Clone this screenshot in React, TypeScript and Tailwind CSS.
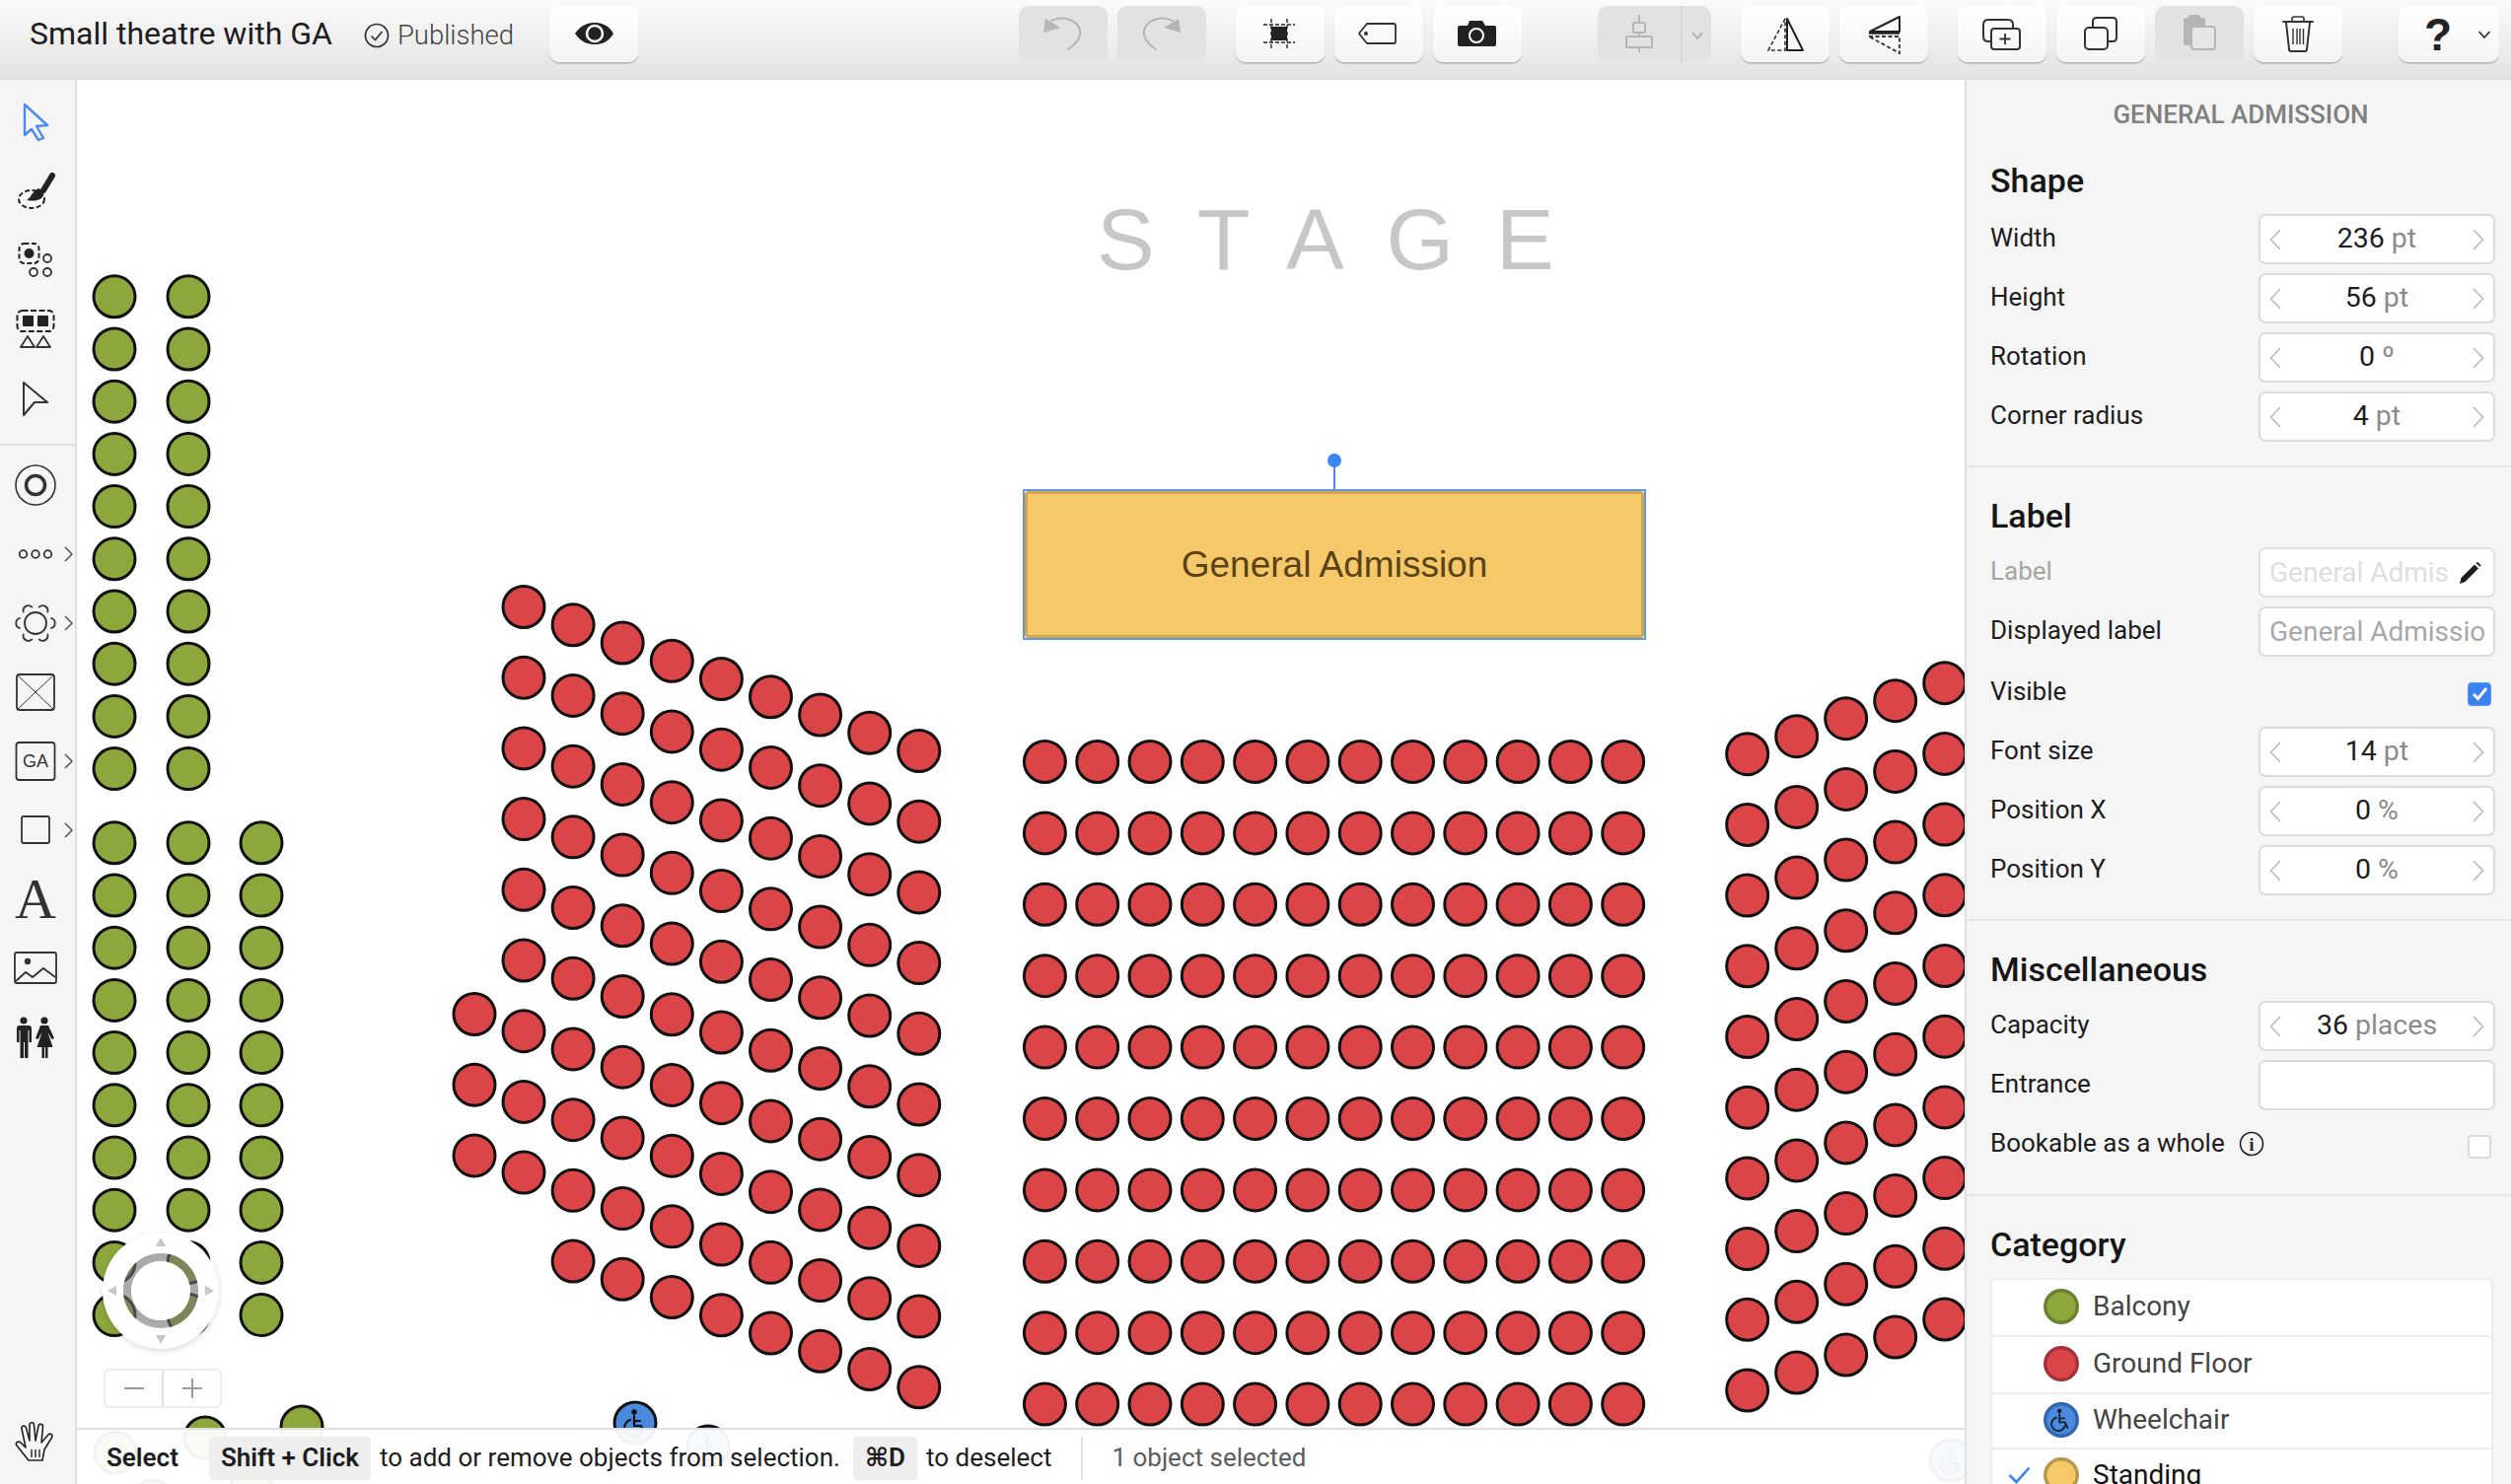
import type { ReactNode } from "react";

type Seat = { x: number; y: number };

// offset of the canvas inside the page, seat coordinates are page coordinates
const OFFSET_X = 78;
const OFFSET_Y = 81;

const greenSeats: Seat[] = [];
for (const x of [116, 191]) {
  for (let i = 0; i < 10; i++) greenSeats.push({ x, y: 300.8 + i * 53.2 });
}
for (const x of [116, 191, 265]) {
  for (let i = 0; i < 10; i++) greenSeats.push({ x, y: 854.8 + i * 53.2 });
}
greenSeats.push({ x: 117, y: 1473 }, { x: 208, y: 1458 }, { x: 306, y: 1447 }, { x: 155, y: 1522 }, { x: 255, y: 1510 });

const redSeats: Seat[] = [];
// left wedge
for (let c = 0; c < 9; c++) {
  const rows = c === 0 ? 9 : 10;
  for (let r = 0; r < rows; r++) {
    redSeats.push({ x: 531 + c * 50.1, y: 615.5 + c * 18.25 + r * 71.7 });
  }
}
for (let r = 0; r < 3; r++) redSeats.push({ x: 481, y: 1028.5 + r * 71.7 });
// centre block
for (let c = 0; c < 12; c++) {
  for (let r = 0; r < 10; r++) {
    redSeats.push({ x: 1059.4 + c * 53.3, y: 772.5 + r * 72.4 });
  }
}
// right wedge
for (let c = 0; c < 5; c++) {
  for (let r = 0; r < 10; r++) {
    redSeats.push({ x: 1771.7 + c * 50, y: 764.7 - c * 18 + r * 71.7 });
  }
}

function WheelchairGlyph({ color, stroke }: { color: string; stroke: number }) {
  return (
    <g fill="none" stroke={color} strokeWidth={stroke} strokeLinecap="round" strokeLinejoin="round">
      <circle cx="-1" cy="-11" r="1.6" fill={color} />
      <path d="M-1 -7 V3 H6 L9 10" />
      <path d="M-1 -2 H5" />
      <path d="M-5 -3 A8.5 8.5 0 1 0 6 7" />
    </g>
  );
}

function Btn({ children, off, width = "w-[90px]", className = "" }: { children: ReactNode; off?: boolean; width?: string; className?: string }) {
  return (
    <div
      className={`${width} h-[57px] shrink-0 rounded-[10px] ${
        off
          ? "bg-[#e2e2e2]"
          : "bg-gradient-to-b from-white to-[#f4f4f4] shadow-[0_2px_1px_rgba(0,0,0,0.18)]"
      } ${className}`}
    >
      {children}
    </div>
  );
}

function BtnIcon({ w = 90, children }: { w?: number; children: ReactNode }) {
  return (
    <svg width={w} height={57} viewBox={`0 0 ${w} 57`} fill="none" className="block">
      {children}
    </svg>
  );
}

function Header() {
  return (
    <div className="h-[81px] shrink-0 flex items-start pt-[6px] border-b-2 border-[#dcdcdc] bg-gradient-to-b from-[#fbfbfb] to-[#e3e3e3]">
      <div className="w-[557px] shrink-0 h-[57px] pl-[30px] flex items-center pb-[1px]">
        <span className="text-[32px] text-[#1d1d1d]">Small theatre with GA</span>
        <svg width="26" height="26" viewBox="0 0 26 26" fill="none" stroke="#333" strokeWidth="1.7" className="ml-[32px] mt-[3px]">
          <circle cx="13" cy="13" r="11.5" />
          <path d="M7.5 13.5 L11.5 17.5 L18.5 9" />
        </svg>
        <span className="ml-[8px] mt-[3px] text-[27.5px] font-light text-[#444]">Published</span>
      </div>

      <Btn>
        <BtnIcon>
          <path d="M26 28 C32 19 40 17 46 17 C52 17 60 19 65 28 C60 37 52 39 46 39 C40 39 32 37 26 28Z" fill="#222" />
          <circle cx="46" cy="28" r="8" fill="#222" stroke="#fff" strokeWidth="2.5" />
        </BtnIcon>
      </Btn>

      <Btn off className="ml-[386px]">
        <BtnIcon>
          <path d="M50 44 C59 38 63 32 62 25 C60 15 46 9 33 15" stroke="#b5b5b5" strokeWidth="2" strokeLinecap="round" />
          <path d="M27 13 L25 27 L42 22Z" fill="#b5b5b5" />
        </BtnIcon>
      </Btn>
      <Btn off className="ml-[10px]">
        <BtnIcon>
          <path d="M39 44 C30 38 26 32 27 25 C29 15 43 9 56 15" stroke="#b5b5b5" strokeWidth="2" strokeLinecap="round" />
          <path d="M62 13 L64 27 L47 22Z" fill="#b5b5b5" />
        </BtnIcon>
      </Btn>

      <Btn className="ml-[30px]">
        <BtnIcon>
          <rect x="36" y="21" width="16" height="14" fill="#222" />
          <path d="M28 19 H60 M28 37 H60" stroke="#222" strokeWidth="1.6" strokeDasharray="4 2" />
          <path d="M36 13 V43 M52 13 V43" stroke="#222" strokeWidth="1.4" strokeDasharray="4 2.5" />
        </BtnIcon>
      </Btn>
      <Btn className="ml-[10px]">
        <BtnIcon>
          <path d="M60 18 H33 L25 28 L33 38 H60 Q62 38 62 36 V20 Q62 18 60 18Z" stroke="#333" strokeWidth="1.8" strokeLinejoin="round" />
          <circle cx="32" cy="28" r="2" fill="#333" />
        </BtnIcon>
      </Btn>
      <Btn className="ml-[10px]">
        <BtnIcon>
          <path d="M27 20 H35 L37 15 H50 L53 20 H62 Q64 20 64 22 V39 Q64 41 62 41 H27 Q25 41 25 39 V22 Q25 20 27 20Z" fill="#222" />
          <circle cx="44" cy="30" r="7" stroke="#fff" strokeWidth="2" />
        </BtnIcon>
      </Btn>

      <Btn off width="w-[115px]" className="ml-[77px] relative">
        <BtnIcon w={115}>
          <path d="M42 9 V47" stroke="#b5b5b5" strokeWidth="2" />
          <rect x="36" y="17" width="12" height="10" rx="1.5" fill="#e2e2e2" stroke="#b5b5b5" strokeWidth="2" />
          <rect x="29" y="31" width="26" height="11" rx="1.5" fill="#e2e2e2" stroke="#b5b5b5" strokeWidth="2" />
          <path d="M85 0 V57" stroke="#d2d2d2" strokeWidth="1.5" />
          <path d="M96 27 L101 33 L106 27" stroke="#aaa" strokeWidth="1.6" />
        </BtnIcon>
      </Btn>

      <Btn className="ml-[30px]">
        <BtnIcon>
          <path d="M45 13 L28 45 H45Z" stroke="#333" strokeWidth="1.6" strokeDasharray="4 2.5" />
          <path d="M47 13 L63 45 H47Z" stroke="#222" strokeWidth="2" strokeLinejoin="round" />
        </BtnIcon>
      </Btn>
      <Btn className="ml-[10px]">
        <BtnIcon>
          <path d="M61 11 V26 H31Z" stroke="#222" strokeWidth="2" strokeLinejoin="round" />
          <path d="M30 27.5 H61" stroke="#222" strokeWidth="2.5" />
          <path d="M30 31 H61 V48 Z" stroke="#333" strokeWidth="1.8" strokeDasharray="4 2.5" />
        </BtnIcon>
      </Btn>

      <Btn className="ml-[30px]">
        <BtnIcon>
          <path d="M33 36 H31 Q26 36 26 31 V19 Q26 14 31 14 H51 Q56 14 56 19 V22" stroke="#333" strokeWidth="2" />
          <rect x="34" y="23" width="29" height="21" rx="3" stroke="#333" strokeWidth="2" />
          <path d="M48 28 V39 M42.5 33.5 H53.5" stroke="#333" strokeWidth="1.8" />
        </BtnIcon>
      </Btn>
      <Btn className="ml-[10px]">
        <BtnIcon>
          <path d="M37 22 V16 Q37 12 41 12 H57 Q61 12 61 16 V32 Q61 36 57 36 H52" stroke="#333" strokeWidth="2" />
          <rect x="29" y="22" width="23" height="22" rx="4" stroke="#333" strokeWidth="2" />
        </BtnIcon>
      </Btn>
      <Btn off className="ml-[10px]">
        <BtnIcon>
          <rect x="29" y="12" width="22" height="28" rx="3" fill="#b5b5b5" />
          <rect x="34" y="9" width="12" height="5" rx="2" fill="#b5b5b5" />
          <rect x="37" y="21" width="24" height="23" rx="3" fill="#e6e6e6" stroke="#b5b5b5" strokeWidth="2" />
        </BtnIcon>
      </Btn>
      <Btn className="ml-[10px]">
        <BtnIcon>
          <path d="M30 16 H60" stroke="#333" strokeWidth="2" strokeLinecap="round" />
          <path d="M39 15 V13 Q39 11 41 11 H49 Q51 11 51 13 V15" stroke="#333" strokeWidth="1.6" />
          <path d="M33 17 L36 44 Q36 46 38 46 H52 Q54 46 54 44 L57 17" stroke="#333" strokeWidth="2" />
          <path d="M40 23 V39 M44 23 V39 M47 23 V39 M50.5 23 V39" stroke="#333" strokeWidth="1.4" />
        </BtnIcon>
      </Btn>

      <Btn width="w-[102px]" className="ml-[57px] relative flex items-center">
        <span className="w-[80px] text-center text-[46px] font-bold leading-none text-[#222] [font-family:'Liberation_Sans',sans-serif]">?</span>
        <svg width="14" height="10" viewBox="0 0 14 10" fill="none" stroke="#333" strokeWidth="1.8">
          <path d="M1.5 2 L7 8 L12.5 2" />
        </svg>
      </Btn>
    </div>
  );
}

function ToolIcon({ children, arrow }: { children: ReactNode; arrow?: boolean }) {
  return (
    <svg width="76" height="70" viewBox="0 0 76 70" fill="none" className="block shrink-0">
      {children}
      {arrow && <path d="M66 28 L73 35 L66 42" stroke="#555" strokeWidth="1.5" />}
    </svg>
  );
}

function Sidebar() {
  return (
    <div className="w-[78px] shrink-0 flex flex-col bg-[#f5f5f5] border-r-2 border-[#dedede] pt-[7px] relative">
      <ToolIcon>
        <path d="M25 18 L48 39 L37 40 L44 52 L39 54 L32 43 L25 49Z" stroke="#4a8af0" strokeWidth="2.4" strokeLinejoin="round" />
      </ToolIcon>
      <ToolIcon>
        <ellipse cx="32" cy="44" rx="13" ry="9" stroke="#222" strokeWidth="2" strokeDasharray="5 2.5" />
        <path d="M53 20 L44 35" stroke="#222" strokeWidth="6" strokeLinecap="round" />
        <path d="M39 33 C44 35 46 40 42 43 C38 46 32 46 27 45 C31 43 32 37 39 33Z" fill="#222" />
      </ToolIcon>
      <ToolIcon>
        <rect x="19.5" y="19" width="20" height="20" rx="5" stroke="#222" strokeWidth="2" strokeDasharray="5 2.5" />
        <circle cx="29.5" cy="29" r="5" fill="#222" />
        <circle cx="48" cy="34" r="4" stroke="#333" strokeWidth="1.8" />
        <circle cx="34" cy="48" r="4" stroke="#333" strokeWidth="1.8" />
        <circle cx="48" cy="48" r="4" stroke="#333" strokeWidth="1.8" />
      </ToolIcon>
      <ToolIcon>
        <rect x="17.5" y="17" width="37" height="21" rx="5" stroke="#222" strokeWidth="2" strokeDasharray="6 2.5" />
        <rect x="23" y="22" width="11" height="11" rx="1" fill="#222" />
        <rect x="38" y="22" width="11" height="11" rx="1" fill="#222" />
        <path d="M28 43 L35 54 H21Z M44 43 L51 54 H37Z" stroke="#333" strokeWidth="1.8" strokeLinejoin="round" />
      </ToolIcon>
      <ToolIcon>
        <path d="M24 20 L48 40 L35 40 L24 53Z" stroke="#333" strokeWidth="2" strokeLinejoin="round" />
      </ToolIcon>

      <div className="h-[2px] bg-[#dedede] mt-[12px] mb-[5px] w-[76px]" />

      <ToolIcon>
        <circle cx="36" cy="35" r="20" stroke="#333" strokeWidth="1.6" />
        <circle cx="36" cy="35" r="9.5" stroke="#333" strokeWidth="3.5" />
      </ToolIcon>
      <ToolIcon arrow>
        <circle cx="23.5" cy="35" r="3.8" stroke="#333" strokeWidth="1.8" />
        <circle cx="36" cy="35" r="3.8" stroke="#333" strokeWidth="1.8" />
        <circle cx="48.5" cy="35" r="3.8" stroke="#333" strokeWidth="1.8" />
      </ToolIcon>
      <ToolIcon arrow>
        <circle cx="36" cy="35" r="11" stroke="#333" strokeWidth="1.8" />
        {[0, 60, 120, 180, 240, 300].map((a) => (
          <path key={a} d="M52 30 A5.2 5.2 0 0 1 52 40" stroke="#333" strokeWidth="1.8" strokeLinecap="round" transform={`rotate(${a} 36 35)`} />
        ))}
      </ToolIcon>
      <ToolIcon>
        <rect x="17" y="17" width="38" height="36" rx="3" stroke="#333" strokeWidth="1.8" />
        <path d="M17 17 L55 53 M55 17 L17 53" stroke="#333" strokeWidth="1" />
      </ToolIcon>
      <ToolIcon arrow>
        <rect x="16.5" y="16" width="39" height="38" rx="3" stroke="#333" strokeWidth="1.8" />
        <text x="36" y="41" textAnchor="middle" fontSize="18" fill="#333" fontFamily="Liberation Sans, sans-serif">GA</text>
      </ToolIcon>
      <ToolIcon arrow>
        <rect x="22" y="21" width="28" height="27" rx="2" stroke="#333" strokeWidth="1.8" />
      </ToolIcon>
      <ToolIcon>
        <text x="36" y="54" textAnchor="middle" fontSize="58" fill="#333" fontFamily="Liberation Serif, serif">A</text>
      </ToolIcon>
      <ToolIcon>
        <rect x="15" y="19" width="42" height="31" rx="2" stroke="#333" strokeWidth="1.8" />
        <circle cx="28" cy="28" r="3.2" fill="#333" />
        <path d="M16 48 L26 39 L33 44 L44 35 L56 44" stroke="#333" strokeWidth="1.8" />
      </ToolIcon>
      <ToolIcon>
        <circle cx="24" cy="18" r="3.6" fill="#222" />
        <path d="M19 23 h10 a3 3 0 0 1 3 3 v14 h-2.5 v-12 h-1 v28 h-3.5 v-16 h-1 v16 h-3.5 v-28 h-1 v12 h-2.5 v-14 a3 3 0 0 1 3-3z" fill="#222" />
        <circle cx="45" cy="18" r="3.6" fill="#222" />
        <path d="M41 23 h8 l6 13 -2.5 1 -4 -7 l5 15 h-5 v11 h-2.5 v-11 h-1 v11 h-2.5 v-11 h-5 l5 -15 -4 7 -2.5 -1 z" fill="#222" />
      </ToolIcon>

      <div className="absolute left-0 top-[1347px]">
        <ToolIcon>
          <path d="M29 53 L17 38 C15 35 18 33 21 35 L26 40 L22 21 C21 18 25 17 26.5 20 L30 33 L30 17 C30 14 34.5 14 34.5 17 L36 33 L39 18 C39.5 15 44 16 43.5 19 L42 35 L49 27 C51 25 54 27 52.5 30 L45 42 L43 53 Z" stroke="#222" strokeWidth="1.6" strokeLinejoin="round" />
          <path d="M32 42 V50 M36 42 V50 M40 42 V50" stroke="#222" strokeWidth="1.4" />
        </ToolIcon>
      </div>
    </div>
  );
}

function Canvas() {
  return (
    <div className="relative flex-1 bg-white overflow-hidden">
      {/* seat map */}
      <svg className="absolute left-0 top-0" width="1914" height="1424" viewBox="0 0 1914 1424">
        <g transform={`translate(${-OFFSET_X} ${-OFFSET_Y})`}>
          {greenSeats.map((s, i) => (
            <circle key={`g${i}`} cx={s.x} cy={s.y} r="21" fill="#8ca73c" stroke="#111" strokeWidth="3" />
          ))}
          {redSeats.map((s, i) => (
            <circle key={`r${i}`} cx={s.x} cy={s.y} r="21" fill="#db4547" stroke="#111" strokeWidth="3" />
          ))}
          {[
            { x: 644, y: 1443 },
            { x: 718, y: 1467 },
            { x: 1978, y: 1481 },
          ].map((s) => (
            <g key={s.x} transform={`translate(${s.x} ${s.y})`}>
              <circle r="21" fill="#4a89dc" stroke="#111" strokeWidth="3" />
              <WheelchairGlyph color="#111" stroke={2.2} />
            </g>
          ))}
          <path d="M1353 467 V497" stroke="#4a8af0" strokeWidth="2" />
          <circle cx="1353" cy="467" r="7" fill="#3b86f5" />
        </g>
      </svg>

      {/* stage label */}
      <div className="absolute left-[1034px] top-[118px] text-[88px] leading-none tracking-[43px] text-[#c6c7c9] whitespace-nowrap [font-family:'Liberation_Sans',sans-serif]">
        STAGE
      </div>

      {/* general admission block */}
      <div className="absolute left-[959px] top-[415px] w-[632px] h-[153px] border-[2px] border-[#5f97df] flex">
        <div className="flex-1 rounded-[4px] bg-[#f5c96a] border-[3px] border-[#d2a550] flex items-center justify-center text-[37px] text-[#5a4214] [font-family:'Liberation_Sans',sans-serif]">
          General Admission
        </div>
      </div>

      {/* compass */}
      <svg width="124" height="124" viewBox="0 0 124 124" className="absolute left-[23px] top-[1166px] drop-shadow-[0_2px_3px_rgba(0,0,0,0.15)]">
        <path fillRule="evenodd" d="M62 3 A59 59 0 1 1 61.9 3Z M62 24 A38 38 0 1 0 62.1 24Z" fill="#fff" />
        <circle cx="62" cy="62" r="34" fill="none" stroke="rgba(120,120,120,0.55)" strokeWidth="8" />
        <circle cx="62" cy="62" r="30" fill="#fff" />
        <path d="M62 8 L67 17 H57Z M62 116 L67 107 H57Z M8 62 L17 57 V67Z M116 62 L107 57 V67Z" fill="#c6c6c6" />
      </svg>

      {/* zoom buttons */}
      <div className="absolute left-[27px] top-[1307px] w-[120px] h-[40px] flex bg-white border-2 border-[#eeeeee] rounded-[6px]">
        <div className="flex-1 flex items-center justify-center border-r-2 border-[#dddddd]">
          <div className="w-[20px] h-[2px] bg-[#999]" />
        </div>
        <div className="flex-1 flex items-center justify-center relative">
          <div className="w-[20px] h-[2px] bg-[#999]" />
          <div className="absolute w-[2px] h-[20px] bg-[#999]" />
        </div>
      </div>

      {/* status bar */}
      <div className="absolute left-0 right-0 bottom-0 h-[57px] bg-white/95 border-t-2 border-[#dedede] flex items-center pl-[30px] pt-[2px] text-[26px] text-[#1d1d1d]">
        <span className="font-semibold">Select</span>
        <span className="ml-[31px] h-[44px] px-[12px] rounded-[4px] bg-[#eeeeee] flex items-center font-semibold">Shift + Click</span>
        <span className="ml-[9px]">to add or remove objects from selection.</span>
        <span className="ml-[13px] h-[44px] px-[12px] rounded-[4px] bg-[#eeeeee] flex items-center font-semibold">⌘D</span>
        <span className="ml-[9px]">to deselect</span>
        <div className="ml-[30px] w-[2px] h-[44px] bg-[#e2e2e2]" />
        <span className="ml-[29px] text-[#5c5c5c]">1 object selected</span>
      </div>
    </div>
  );
}

function Stepper({ value, unit }: { value: string; unit: string }) {
  return (
    <div className="w-[240px] h-[51px] bg-white border-2 border-[#dbdbdb] rounded-[7px] flex items-center justify-between px-[9px]">
      <svg width="12" height="22" viewBox="0 0 12 22" fill="none" stroke="#bbb" strokeWidth="1.6">
        <path d="M11 1 L1.5 11 L11 21" />
      </svg>
      <span className="text-[28.5px]">
        <span className="text-[#1d1d1d]">{value}</span>
        <span className="text-[#8a8a8a] ml-[7px]">{unit}</span>
      </span>
      <svg width="12" height="22" viewBox="0 0 12 22" fill="none" stroke="#bbb" strokeWidth="1.6">
        <path d="M1 1 L10.5 11 L1 21" />
      </svg>
    </div>
  );
}

function Row({ label, children, muted }: { label: ReactNode; children?: ReactNode; muted?: boolean }) {
  return (
    <div className="flex items-center justify-between h-[51px]">
      <span className={`text-[26px] pb-[2px] flex items-center ${muted ? "text-[#a5a5a5]" : "text-[#1d1d1d]"}`}>{label}</span>
      {children}
    </div>
  );
}

function SectionTitle({ children, mb }: { children: ReactNode; mb: string }) {
  return <div className={`h-[44px] flex items-center text-[34px] font-medium text-[#161616] ${mb}`}>{children}</div>;
}

function Check({ checked }: { checked?: boolean }) {
  return checked ? (
    <div className="w-[24px] h-[24px] mr-[4px] mt-[4px] rounded-[4px] bg-[#3b82f0] border border-[#5a96f0] flex items-center justify-center">
      <svg width="17" height="15" viewBox="0 0 17 15" fill="none" stroke="#fff" strokeWidth="3">
        <path d="M2 8 L6.5 12.5 L15 2" />
      </svg>
    </div>
  ) : (
    <div className="w-[24px] h-[24px] mr-[4px] mt-[4px] rounded-[4px] bg-white border-2 border-[#dbdbdb]" />
  );
}

function CategoryRow({ name, fill, ring, height, active, glyph }: { name: string; fill: string; ring: string; height: string; active?: boolean; glyph?: boolean }) {
  return (
    <div className={`${height} shrink-0 flex items-center border-b-2 border-[#ececec] pl-[16px] pb-[2px]`}>
      <div className="w-[36px] shrink-0">
        {active && (
          <svg width="23" height="18" viewBox="0 0 23 18" fill="none" stroke="#3b82f0" strokeWidth="2.6">
            <path d="M1.5 9 L8.5 16 L21.5 1.5" />
          </svg>
        )}
      </div>
      <svg width="36" height="38" viewBox="0 0 36 38" className="shrink-0">
        <circle cx="18" cy="19" r="16.3" fill={fill} stroke={ring} strokeWidth="3.4" />
        {glyph && (
          <g transform="translate(17 19) scale(0.82)">
            <WheelchairGlyph color="#123" stroke={2.2} />
          </g>
        )}
      </svg>
      <span className={`ml-[14px] text-[28px] ${active ? "text-[#111]" : "text-[#444]"}`}>{name}</span>
    </div>
  );
}

function Panel() {
  return (
    <div className="w-[554px] shrink-0 bg-[#f5f5f5] border-l-2 border-[#dedede] overflow-hidden">
      <div className="h-[68px] flex items-center justify-center pl-[4px] pt-[2px] text-[26px] font-medium text-[#808080]">GENERAL ADMISSION</div>

      <div className="pl-[24px] pr-[16px] pt-[12px] pb-[24px] border-b-2 border-[#e6e6e6]">
        <SectionTitle mb="mb-[12px]">Shape</SectionTitle>
        <div className="flex flex-col gap-[9px]">
          <Row label="Width"><Stepper value="236" unit="pt" /></Row>
          <Row label="Height"><Stepper value="56" unit="pt" /></Row>
          <Row label="Rotation"><Stepper value="0" unit="º" /></Row>
          <Row label="Corner radius"><Stepper value="4" unit="pt" /></Row>
        </div>
      </div>

      <div className="pl-[24px] pr-[16px] pt-[27px] pb-[24px] border-b-2 border-[#e6e6e6]">
        <SectionTitle mb="mb-[10px]">Label</SectionTitle>
        <div className="flex flex-col gap-[9px]">
          <Row label="Label" muted>
            <div className="w-[240px] h-[51px] bg-white border-2 border-[#dfdfdf] rounded-[7px] flex items-center pl-[9px] pr-[12px] overflow-hidden">
              <span className="flex-1 text-[28px] text-[#dedede] whitespace-nowrap overflow-hidden">General Admis</span>
              <svg width="24" height="24" viewBox="0 0 24 24" className="shrink-0">
                <path d="M2 23 L3.5 17 L17 3.5 L21 7.5 L7.5 21Z" fill="#1d1d1d" />
                <path d="M18.5 2 L20 0.8 L23.5 4.2 L22.3 5.8Z" fill="#1d1d1d" />
              </svg>
            </div>
          </Row>
          <Row label="Displayed label">
            <div className="w-[240px] h-[51px] bg-white border-2 border-[#dbdbdb] rounded-[7px] flex items-center pl-[9px] overflow-hidden">
              <span className="text-[28px] text-[#a8a8a8] whitespace-nowrap">General Admissio</span>
            </div>
          </Row>
          <div className="flex items-center justify-between h-[53px]">
            <span className="text-[26px] pb-[1px] text-[#1d1d1d]">Visible</span>
            <Check checked />
          </div>
          <Row label="Font size"><Stepper value="14" unit="pt" /></Row>
          <Row label="Position X"><Stepper value="0" unit="%" /></Row>
          <Row label="Position Y"><Stepper value="0" unit="%" /></Row>
        </div>
      </div>

      <div className="pl-[24px] pr-[16px] pt-[27px] pb-[25px] border-b-2 border-[#e6e6e6]">
        <SectionTitle mb="mb-[10px]">Miscellaneous</SectionTitle>
        <div className="flex flex-col gap-[9px]">
          <Row label="Capacity"><Stepper value="36" unit="places" /></Row>
          <Row label="Entrance">
            <div className="w-[240px] h-[51px] bg-white border-2 border-[#dbdbdb] rounded-[7px]" />
          </Row>
          <Row
            label={
              <>
                Bookable as a whole
                <svg width="26" height="26" viewBox="0 0 26 26" fill="none" className="ml-[14px]">
                  <circle cx="13" cy="13" r="11.5" stroke="#222" strokeWidth="1.6" />
                  <text x="13" y="20" textAnchor="middle" fontSize="18" fontWeight="bold" fill="#222" fontFamily="Liberation Serif, serif">i</text>
                </svg>
              </>
            }
          >
            <Check />
          </Row>
        </div>
      </div>

      <div className="pl-[24px] pr-[16px] pt-[27px]">
        <SectionTitle mb="mb-[12px]">Category</SectionTitle>
        <div className="w-[510px] bg-white border-2 border-[#ececec] rounded-[6px] flex flex-col">
          <CategoryRow name="Balcony" fill="#8ca73c" ring="#6b8030" height="h-[58px]" />
          <CategoryRow name="Ground Floor" fill="#db4547" ring="#a5323a" height="h-[58px]" />
          <CategoryRow name="Wheelchair" fill="#4a89dc" ring="#2f68b0" height="h-[56px]" glyph />
          <CategoryRow name="Standing" fill="#f5c96a" ring="#b8964f" height="h-[56px]" active />
        </div>
      </div>
    </div>
  );
}

export default function App() {
  return (
    <div className="h-screen w-[2546px] flex flex-col overflow-hidden bg-white [font-family:Roboto,'DejaVu_Sans',sans-serif]">
      <Header />
      <div className="flex flex-1 min-h-0">
        <Sidebar />
        <Canvas />
        <Panel />
      </div>
    </div>
  );
}
